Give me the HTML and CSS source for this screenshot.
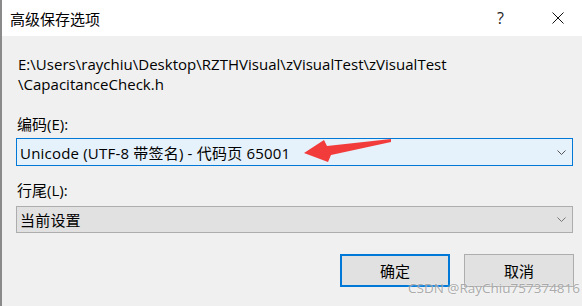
FILE: index.html
```html
<!DOCTYPE html>
<html lang="zh-CN">
<head>
  <meta charset="UTF-8" />
  <title>高级保存选项</title>
  <link rel="stylesheet" href="styles.css">
</head>
<body>
  <div class="window">
    <header class="titlebar">
      <span class="title">高级保存选项</span>
      <span class="help">?</span>
      <span class="close">
        <svg width="12" height="12" viewBox="0 0 12 12"><path d="M0.5 0.5 L11.5 11.5 M11.5 0.5 L0.5 11.5" stroke="#111" stroke-width="1" fill="none"/></svg>
      </span>
    </header>

    <div class="content">
      <p class="path">E:\Users\raychiu\Desktop\RZTHVisual\zVisualTest\zVisualTest<br>\CapacitanceCheck.h</p>

      <label class="field-label">编码(E):</label>
      <div class="select focused">
        <span>Unicode (UTF-8 带签名) - 代码页 65001</span>
        <svg class="chevron" width="9" height="5" viewBox="0 0 9 5"><path d="M0.5 0.5 L4.5 4.5 L8.5 0.5" stroke="#555" fill="none"/></svg>
      </div>

      <label class="field-label second">行尾(L):</label>
      <div class="select">
        <span>当前设置</span>
        <svg class="chevron" width="9" height="5" viewBox="0 0 9 5"><path d="M0.5 0.5 L4.5 4.5 L8.5 0.5" stroke="#777" fill="none"/></svg>
      </div>

      <div class="buttons">
        <button class="btn default">确定</button>
        <button class="btn">取消</button>
      </div>
    </div>

    <svg class="arrow" width="582" height="306" viewBox="0 0 582 306">
      <polygon points="304,153 324,140 327,146 391,139 391,142 331,155 328,162" fill="#f23c3c"/>
    </svg>
    <div class="watermark">CSDN @RayChiu757374816</div>
  </div>
</body>
</html>
```

FILE: styles.css
```css
body {
  margin: 0;
  padding: 0;
  font-family: "Open Sans", "Noto Sans CJK SC", sans-serif;
  font-size: 15px;
  color: #000;
}
.window {
  position: relative;
  width: 582px;
  height: 306px;
  box-sizing: border-box;
  border-left: 2px solid #8a8a8a;
  background-color: #f0f0f0;
  overflow: hidden;
}
.titlebar {
  display: flex;
  align-items: center;
  height: 36px;
  background-color: #fff;
  padding-left: 8px;
}
.title {
  flex: 1;
  font-family: "Noto Sans CJK SC", sans-serif;
  font-size: 15px;
}
.help {
  width: 14px;
  margin-right: 41px;
  font-size: 16px;
  color: #222;
}
.close {
  display: flex;
  width: 12px;
  margin-right: 18px;
}
.content {
  padding: 18px 9px 0 14px;
}
.path {
  margin: 0 0 0 2px;
  line-height: 20px;
  letter-spacing: 0.02px;
}
.field-label {
  display: block;
  margin: 20px 0 4px 1px;
  line-height: 20px;
}
.field-label.second {
  margin-top: 14px;
  margin-bottom: 6px;
}
.select {
  display: flex;
  align-items: center;
  justify-content: space-between;
  height: 27px;
  box-sizing: border-box;
  border: 1px solid #adadad;
  background-color: #e1e1e1;
  padding: 0 6px 0 3px;
  letter-spacing: 0.2px;
}
.select.focused {
  height: 28px;
  border-color: #0078d7;
  background-color: #e5f1fb;
}
.chevron {
  display: block;
}
.buttons {
  display: flex;
  justify-content: flex-end;
  gap: 14px;
  margin-top: 21px;
  margin-right: -1px;
}
.btn {
  width: 110px;
  height: 33px;
  box-sizing: border-box;
  border: 1px solid #adadad;
  background-color: #e1e1e1;
  font-family: "Noto Sans CJK SC", sans-serif;
  font-size: 15px;
  color: #000;
  padding: 0;
}
.btn.default {
  border: 2px solid #0078d7;
}
.arrow {
  position: absolute;
  left: -2px;
  top: 0;
  pointer-events: none;
}
.watermark {
  position: absolute;
  left: 406px;
  top: 279px;
  font-family: "Open Sans", sans-serif;
  font-size: 13.5px;
  color: rgba(150, 150, 150, 0.8);
  text-shadow: 0 0 2px rgba(255, 255, 255, 0.8);
  white-space: nowrap;
}
```
